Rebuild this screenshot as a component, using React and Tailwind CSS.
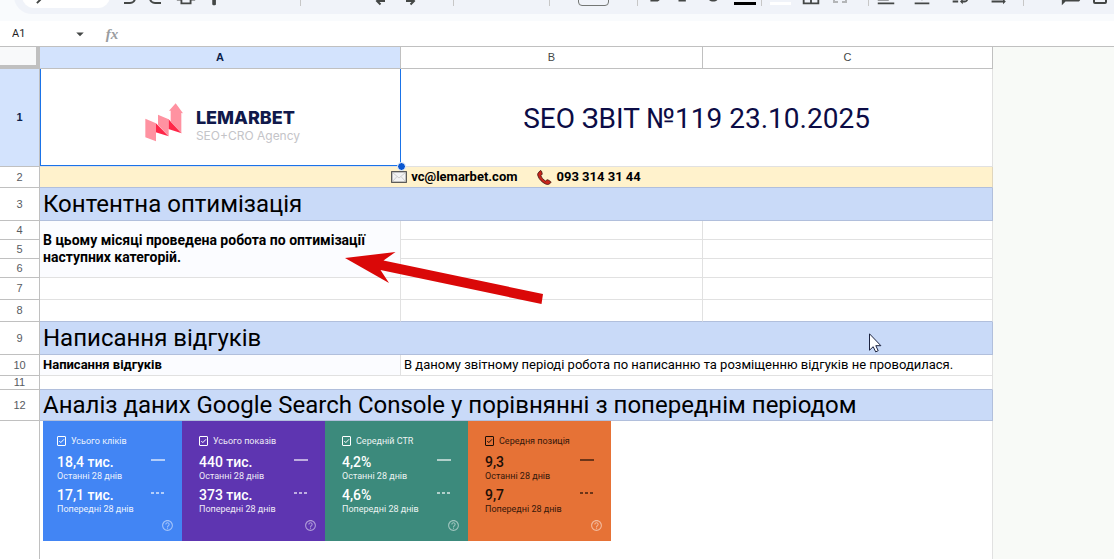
import { useState } from "react";
import {
  MdPrint, MdFormatPaint, MdSearch, MdArrowDropDown, MdFormatBold,
  MdFormatItalic, MdStrikethroughS, MdBorderAll, MdFormatAlignLeft, MdVerticalAlignBottom,
  MdWrapText, MdTextRotationNone, MdAddComment, MdHelpOutline,
} from "react-icons/md";

const CELL = "border-r border-b p-0 overflow-hidden";
const GREY = "border-[#e1e1e1]";
const HEAD = "border-r border-b border-[#c0c0c0] p-0 font-['Liberation_Sans',sans-serif] text-[11px] leading-none text-center align-middle";
const ICON = "w-5 h-5 fill-none stroke-current stroke-2";

const cards = [
  { label: "Усього кліків", now: "18,4 тис.", before: "17,1 тис.", box: "w-[139px] pl-[14px] bg-[#4285f4] text-white" },
  { label: "Усього показів", now: "440 тис.", before: "373 тис.", box: "w-[143px] pl-[17px] bg-[#5e35b1] text-white" },
  { label: "Середній CTR", now: "4,2%", before: "4,6%", box: "w-[143px] pl-[17px] bg-[#3c8a7c] text-white" },
  { label: "Середня позиція", now: "9,3", before: "9,7", box: "w-[143px] pl-[17px] bg-[#e67236] text-[#1c0e06]", dark: true },
];

const Tool = ({ label, children, className = "w-[29px]" }) => (
  <button aria-label={label} className={`h-5 shrink-0 flex items-center justify-center ${className}`}>
    {children}
  </button>
);

const Divider = () => <span className="w-px h-5 shrink-0 bg-[#c7c7c7]" />;

const Toolbar = () => (
  <header className="h-[21px] shrink-0 overflow-hidden flex flex-col justify-end bg-[#f9fbfd] pb-[7px] pl-[14px]">
    <div className="h-9 shrink-0 flex items-center rounded-l-full bg-[#f0f3f9] pl-2 text-[22px] text-[#444746]">
      <button aria-label="Меню" className="w-[88px] h-6 shrink-0 rounded-full bg-white flex items-center pl-[11px]">
        <MdSearch className="-scale-x-100" />
      </button>
      <div className="flex shrink-0 items-center pl-[3px] w-[190px]">
        <Tool label="Скасувати">
          <svg viewBox="0 0 20 20" className={ICON}><path d="M8 3L4 7l4 4M4 7h8a5 5 0 0 1 0 10H6" /></svg>
        </Tool>
        <Tool label="Повторити">
          <svg viewBox="0 0 20 20" className={ICON}><path d="M12 3l4 4-4 4M16 7H8a5 5 0 0 0 0 10h6" /></svg>
        </Tool>
        <Tool label="Друк"><MdPrint /></Tool>
        <Tool label="Копіювати формат"><MdFormatPaint /></Tool>
      </div>
      <Divider />
      <div className="flex shrink-0 items-center pl-[65px] w-[152px]">
        <Tool label="Менше знаків">
          <svg viewBox="0 0 20 20" className={ICON}><path d="M14 15H7M9.500 11.500L6 15l3.500 3.500" /></svg>
        </Tool>
        <Tool label="Більше знаків">
          <svg viewBox="0 0 20 20" className={ICON}><path d="M6 15h7M10.500 11.500L14 15l-3.500 3.500" /></svg>
        </Tool>
      </div>
      <Divider />
      <span className="w-[95px] shrink-0" />
      <Divider />
      <div className="w-[87px] shrink-0 flex justify-center">
        <button aria-label="Розмір шрифту" className="w-[31px] h-5 rounded border border-[#747775]" />
      </div>
      <Divider />
      <div className="flex shrink-0 items-center pl-[2px] w-[123px]">
        <Tool label="Жирний"><MdFormatBold /></Tool>
        <Tool label="Курсив"><MdFormatItalic /></Tool>
        <Tool label="Закреслений"><MdStrikethroughS /></Tool>
        <Tool label="Колір тексту" className="w-[35px]"><span className="w-[22px] h-[3px] bg-black mt-[15px]" /></Tool>
      </div>
      <Divider />
      <div className="flex shrink-0 items-center pl-[3px] w-[106px]">
        <Tool label="Колір заливки" className="w-[31px]"><span className="w-[21px] h-[3px] bg-white mt-[15px]" /></Tool>
        <Tool label="Межі"><MdBorderAll /></Tool>
        <Tool label="Об'єднати">
          <svg viewBox="0 0 14 14" className="w-3.5 h-3.5 fill-none stroke-[#b4b6b8] stroke-2">
            <path d="M1 5V1h4M9 1h4v4M13 9v4H9M5 13H1V9" />
          </svg>
        </Tool>
      </div>
      <Divider />
      <div className="flex shrink-0 items-center w-[154px]">
        <Tool label="Вирівнювання" className="w-[34px]"><MdFormatAlignLeft /></Tool>
        <Tool label="По вертикалі" className="w-[38px]"><MdVerticalAlignBottom /></Tool>
        <Tool label="Перенесення" className="w-[38px]"><MdWrapText /></Tool>
        <Tool label="Поворот" className="w-[38px]"><MdTextRotationNone /></Tool>
      </div>
      <Divider />
      <div className="flex shrink-0 items-center pl-[32px]">
        <Tool label="Коментар"><MdAddComment className="-scale-x-100" /></Tool>
        <Tool label="Діаграма">
          <svg viewBox="0 0 20 20" className={ICON}>
            <rect x="4" y="4" width="12" height="13" rx="1" />
            <path d="M7 14V9M10 14V7M13 14v-3" />
          </svg>
        </Tool>
      </div>
    </div>
  </header>
);

const FormulaBar = () => {
  const [cell, setCell] = useState("A1");
  return (
    <div className="h-[26px] shrink-0 flex items-center bg-white border-b border-[#c0c0c0]">
      <input
        aria-label="Поле імені"
        value={cell}
        onChange={(e) => setCell(e.target.value)}
        className="w-[71px] pl-3 text-[11px] leading-4 text-[#1f1f1f] outline-none"
      />
      <button aria-label="Діапазони" className="w-[18px] flex justify-center text-[#444746]">
        <MdArrowDropDown className="text-lg shrink-0" />
      </button>
      <span className="w-[46px] text-center font-['Liberation_Serif',serif] font-bold italic text-[15px] leading-4 text-[#9a9da0]">fx</span>
      <input aria-label="Формула" className="flex-1 min-w-0 text-xs outline-none" />
    </div>
  );
};

const Logo = () => (
  <div className="flex items-center justify-center gap-3 pt-2 pl-1">
    <svg viewBox="8 6 120 120" className="w-10 h-10">
      <path fill="#ff2648" d="M43 69l39 40-39-12zM81 57l40 43-40-13z" />
      <path fill="#ff92a1" d="M12 56l32 14v54l-32-12zM50 44l32 14v51L50 75zM88 32h-5l20-22 22 30-5-1v61L88 65z" />
    </svg>
    <div className="pt-2">
      <div className="font-['Inter',sans-serif] font-extrabold text-lg leading-5 text-[#10194b]">LEMARBET</div>
      <div className="font-['Inter',sans-serif] text-xs leading-4 text-[#c4c4c8]">SEO+CRO Agency</div>
    </div>
  </div>
);

const Envelope = () => (
  <svg viewBox="0 0 16 12" className="w-4 h-3">
    <rect x="0.7" y="0.7" width="14.6" height="10.6" fill="#f3f3f3" stroke="#4b4b4b" strokeWidth="1.2" />
    <path d="M1.5 1.5L8 7l6.5-5.5M1.5 10.5L6 5.5M14.5 10.5L10 5.5" fill="none" stroke="#c3c3c3" strokeWidth="0.8" />
  </svg>
);

const Phone = () => (
  <svg viewBox="0 0 15 15" className="w-[15px] h-[15px]">
    <path d="M1 3.2L3 .8c.6-.4 1.200-.2 1.500.5l.7 2.200c.1.6-.1 1-.6 1.400l-.8.6c.8 2.200 2.600 4.400 4.900 5.500l1-.9c.5-.4 1-.4 1.500-.1l2.300 1.400c.6.4.6 1 .1 1.500l-1.500 1.200c-1 .6-2.300.5-3.500-.1C4.900 12.300 2 9.300.9 5.800.6 4.800.5 4 1 3.200z" fill="#c8251b" stroke="#3a0f0c" strokeWidth="0.8" />
  </svg>
);

const StatCard = ({ card }) => {
  const [on, setOn] = useState(true);
  const edge = card.dark ? "border-[#1c0e06]" : "border-white";
  return (
    <div className={`h-[120px] pr-2 pt-[14px] ${card.box}`}>
      <label className="flex items-center gap-[5px] pb-0.5 text-[9px] leading-3">
        <span className="grid">
          <input
            type="checkbox"
            checked={on}
            onChange={() => setOn(!on)}
            className={`appearance-none w-[9px] h-[10px] border rounded-[1px] col-start-1 row-start-1 ${edge}`}
          />
          {on && (
            <svg viewBox="0 0 9 10" className="w-[9px] h-[10px] col-start-1 row-start-1 pointer-events-none fill-none stroke-current">
              <path d="M2.300 5l1.500 1.600L7 3.300" />
            </svg>
          )}
        </span>
        <span className="opacity-90">{card.label}</span>
      </label>
      {[[card.now, "Останні 28 днів", "M0 1h14"], [card.before, "Попередні 28 днів", "M0 1h3M5 1h3M10 1h3"]].map(([value, note, line]) => (
        <div key={note} className="flex justify-between pt-[5px]">
          <div>
            <div className="text-sm leading-[17px] font-medium">{value}</div>
            <div className="text-[9px] leading-[11px] opacity-90">{note}</div>
          </div>
          <svg viewBox="0 0 14 2" className="w-[14px] h-0.5 mt-[5px] mr-[9px] fill-none stroke-current stroke-[1.5] opacity-80">
            <path d={line} />
          </svg>
        </div>
      ))}
      <MdHelpOutline className="ml-auto mt-1 text-[13px] text-white opacity-50" />
    </div>
  );
};

const RowHead = ({ n, active }) => (
  <th scope="row" className={`${HEAD} ${active ? "bg-[#d3e3fd] font-bold text-[#0b1f4b]" : "bg-white font-normal text-[#575b5f]"}`}>
    {n}
  </th>
);

const Section = ({ n, h, children }) => (
  <tr className={h}>
    <RowHead n={n} />
    <td colSpan={3} className={`${CELL} border-[#b1bfdc] bg-[#c9daf8] pl-[3px] text-2xl leading-7 align-middle`}>{children}</td>
  </tr>
);

const Blank = ({ last }) => {
  const edge = last ? "border-r-[#e1e1e1] border-b-[#b1bfdc]" : GREY;
  return <td className={`${CELL} ${edge}`} />;
};

const Sheet = () => (
  <table className="table-fixed w-[993px] shrink-0 self-start border-separate border-spacing-0 bg-white text-black">
    <colgroup>
      <col className="w-[40px]" />
      <col className="w-[361px]" />
      <col className="w-[302px]" />
      <col className="w-[290px]" />
    </colgroup>
    <thead>
      <tr className="h-[22px]">
        <td className="border-r-4 border-b-4 border-[#c0c0c0] bg-[#f8f9fa] p-0" />
        <th scope="col" className={`${HEAD} bg-[#d3e3fd] font-bold text-[#0b1f4b]`}>A</th>
        <th scope="col" className={`${HEAD} font-normal text-[#444746]`}>B</th>
        <th scope="col" className={`${HEAD} font-normal text-[#444746]`}>C</th>
      </tr>
    </thead>
    <tbody>
      <tr className="h-[98px]">
        <RowHead n={1} active />
        <td className="relative border-r border-b border-[#e1e1e1] p-0 align-middle">
          <Logo />
          <div className="absolute inset-0 -right-px border-x border-b border-[#1a73e8]" />
          <div className="absolute -right-[6px] -bottom-[5px] z-10 w-[9px] h-[9px] rounded-full border border-white bg-[#0b57d0]" />
        </td>
        <td colSpan={2} className={`${CELL} ${GREY} text-center text-[28px] leading-8 text-[#0c0c46] align-middle pt-0.5`}>
          SEO ЗВІТ №119 23.10.2025
        </td>
      </tr>
      <tr className="h-[21px]">
        <RowHead n={2} />
        <td colSpan={3} className={`${CELL} border-r-[#e0d6bd] border-b-[#b1bfdc] bg-[#fff2cc]`}>
          <div className="flex items-center justify-center text-[13px] leading-4 font-bold">
            <Envelope />
            <a href="mailto:vc@lemarbet.com" className="ml-1 mr-5">vc@lemarbet.com</a>
            <Phone />
            <a href="tel:0933143144" className="ml-1">093 314 31 44</a>
          </div>
        </td>
      </tr>
      <Section n={3} h="h-[33px]">Контентна оптимізація</Section>
      <tr className="h-[19px]">
        <RowHead n={4} />
        <td rowSpan={3} className={`${CELL} ${GREY} bg-[#fbfcff] pl-[3px] text-sm leading-[17px] font-bold align-middle`}>
          В цьому місяці проведена робота по оптимізації наступних категорій.
        </td>
        <Blank />
        <Blank />
      </tr>
      <tr className="h-[19px]"><RowHead n={5} /><Blank /><Blank /></tr>
      <tr className="h-[19px]"><RowHead n={6} /><Blank /><Blank /></tr>
      <tr className="h-[22px]"><RowHead n={7} /><Blank /><Blank /><Blank /></tr>
      <tr className="h-[22px]"><RowHead n={8} /><Blank last /><Blank last /><Blank last /></tr>
      <Section n={9} h="h-[33px]">Написання відгуків</Section>
      <tr className="h-[21px]">
        <RowHead n={10} />
        <td className={`${CELL} ${GREY} bg-[#fbfcff] pl-[3px] text-[13px] leading-4 font-bold`}>Написання відгуків</td>
        <td colSpan={2} className={`${CELL} ${GREY} pl-[3px] text-[13px] leading-4 whitespace-nowrap`}>
          В даному звітному періоді робота по написанню та розміщенню відгуків не проводилася.
        </td>
      </tr>
      <tr className="h-[14px]">
        <RowHead n={11} />
        <td colSpan={3} className={`${CELL} border-r-[#e1e1e1] border-b-[#b1bfdc]`} />
      </tr>
      <Section n={12} h="h-[31px]">Аналіз даних Google Search Console у порівнянні з попереднім періодом</Section>
      <tr className="h-[160px]">
        <RowHead n="" />
        <td colSpan={3} className={`${CELL} ${GREY} pl-[3px] align-top`}>
          <div className="flex">
            {cards.map((card) => <StatCard key={card.label} card={card} />)}
          </div>
        </td>
      </tr>
    </tbody>
  </table>
);

const App = () => (
  <div className="h-screen flex flex-col overflow-hidden font-['Roboto',sans-serif]">
    <Toolbar />
    <FormulaBar />
    <main className="relative flex flex-1 min-h-0 overflow-hidden bg-[#f8faf7]">
      <Sheet />
      <svg viewBox="0 0 200 54" className="absolute left-[344px] top-[204px] w-[200px] h-[54px] pointer-events-none">
        <path fill="#da0808" d="M1 7L51.500 1 39.500 9.500 199 43l-1.500 10L36.500 19 45 32z" />
      </svg>
      <svg viewBox="0 0 13 20" className="absolute left-[869px] top-[286px] w-[13px] h-5 pointer-events-none">
        <path fill="#fff" stroke="#1c2340" d="M.5.800v16.400l3.700-3.500 2.500 5.200 2.500-1.200-2.400-5h5.100z" />
      </svg>
    </main>
  </div>
);

export default App;
